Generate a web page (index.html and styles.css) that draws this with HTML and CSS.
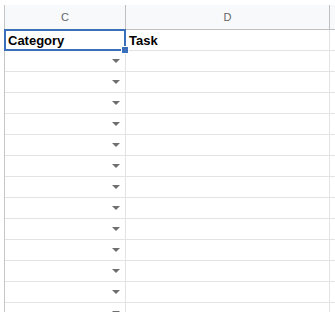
FILE: index.html
```html
<!DOCTYPE html>
<html>
<head>
<meta charset="utf-8">
<link rel="stylesheet" href="styles.css">
</head>
<body>
<div class="sheet">
  <div class="hdr c">C</div>
  <div class="hdr d">D</div>
  <div class="hdr e"></div>

  <div class="cell c sel"><span class="txt">Category</span><span class="handle"></span></div>
  <div class="cell d"><span class="txt">Task</span></div>
  <div class="cell e"></div>

  <div class="cell c"><span class="arrow"></span></div><div class="cell d"></div><div class="cell e"></div>
  <div class="cell c"><span class="arrow"></span></div><div class="cell d"></div><div class="cell e"></div>
  <div class="cell c"><span class="arrow"></span></div><div class="cell d"></div><div class="cell e"></div>
  <div class="cell c"><span class="arrow"></span></div><div class="cell d"></div><div class="cell e"></div>
  <div class="cell c"><span class="arrow"></span></div><div class="cell d"></div><div class="cell e"></div>
  <div class="cell c"><span class="arrow"></span></div><div class="cell d"></div><div class="cell e"></div>
  <div class="cell c"><span class="arrow"></span></div><div class="cell d"></div><div class="cell e"></div>
  <div class="cell c"><span class="arrow"></span></div><div class="cell d"></div><div class="cell e"></div>
  <div class="cell c"><span class="arrow"></span></div><div class="cell d"></div><div class="cell e"></div>
  <div class="cell c"><span class="arrow"></span></div><div class="cell d"></div><div class="cell e"></div>
  <div class="cell c"><span class="arrow"></span></div><div class="cell d"></div><div class="cell e"></div>
  <div class="cell c"><span class="arrow"></span></div><div class="cell d"></div><div class="cell e"></div>
  <div class="cell c"><span class="arrow"></span></div><div class="cell d"></div><div class="cell e"></div>
</div>
</body>
</html>
```

FILE: styles.css
```css
html, body {
  margin: 0;
  padding: 0;
  background: #ffffff;
  overflow: hidden;
}

body {
  width: 335px;
  height: 312px;
  font-family: "Liberation Sans", Arial, sans-serif;
}

.sheet {
  margin: 5px 0 0 4px;
  display: grid;
  grid-template-columns: 121px 204px 10px;
  grid-template-rows: 25px;
  grid-auto-rows: 21px;
  border-left: 1px solid #c7c7c7;
}

.hdr {
  background: #f8f9fa;
  border-bottom: 1px solid #c0c0c0;
  border-right: 1px solid #c0c0c0;
  color: #666666;
  font-size: 11px;
  display: flex;
  align-items: center;
  justify-content: center;
}

.cell {
  border-bottom: 1px solid #e2e3e3;
  border-right: 1px solid #e2e3e3;
  position: relative;
  display: flex;
  align-items: center;
  font-size: 13px;
  font-weight: bold;
  color: #000000;
  padding-left: 3px;
}

.sel::after {
  content: "";
  position: absolute;
  left: -1px;
  top: -1px;
  right: -1px;
  bottom: -1px;
  border: 2px solid #3a6fba;
  pointer-events: none;
}

.handle {
  position: absolute;
  right: -4px;
  bottom: -4px;
  width: 6px;
  height: 6px;
  background: #3a6fba;
  border: 1px solid #ffffff;
  z-index: 2;
}

.arrow {
  position: absolute;
  left: 107px;
  top: 8px;
  width: 0;
  height: 0;
  border-left: 4px solid transparent;
  border-right: 4px solid transparent;
  border-top: 4px solid #6f6f6f;
}
```
